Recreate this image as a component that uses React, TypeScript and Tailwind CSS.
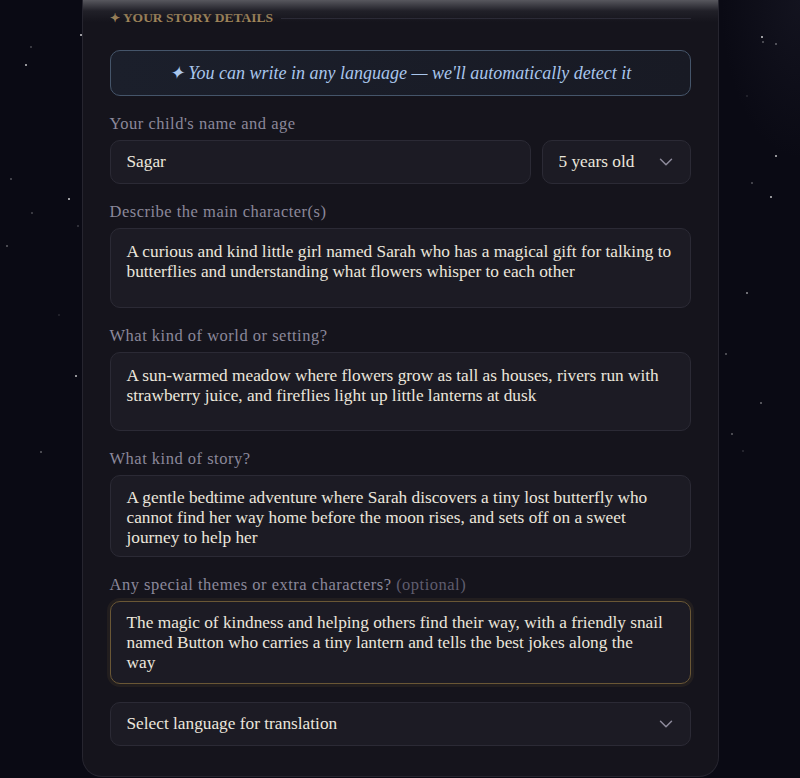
import { useEffect, useRef, useState } from 'react';
import { ChevronDown } from 'lucide-react';

const stars = [
  { x: 80, y: 34, o: 0.8 }, { x: 30, y: 46, o: 0.25 }, { x: 25, y: 64, o: 0.75 },
  { x: 10, y: 178, o: 0.3 }, { x: 68, y: 198, o: 0.8 }, { x: 31, y: 212, o: 0.25 },
  { x: 77, y: 225, o: 0.2 }, { x: 6, y: 245, o: 0.35 }, { x: 58, y: 314, o: 0.12 },
  { x: 75, y: 375, o: 0.75 }, { x: 40, y: 451, o: 0.35 },
  { x: 761, y: 36, o: 0.85 }, { x: 762, y: 41, o: 0.35 }, { x: 775, y: 43, o: 0.4 },
  { x: 746, y: 95, o: 0.12 }, { x: 775, y: 155, o: 0.75 }, { x: 751, y: 182, o: 0.3 },
  { x: 770, y: 196, o: 0.75 }, { x: 746, y: 292, o: 0.55 }, { x: 725, y: 353, o: 0.35 },
  { x: 760, y: 402, o: 0.4 }, { x: 731, y: 433, o: 0.35 }, { x: 742, y: 450, o: 0.15 },
];

const ages = ['3 years old', '4 years old', '5 years old', '6 years old', '7 years old', '8 years old'];

function Label({ children }: { children: React.ReactNode }) {
  return <label className="block text-[16.5px] leading-[20px] tracking-[0.5px] text-[#8b889a] mb-[6px]">{children}</label>;
}

export default function App() {
  const [name, setName] = useState('Sagar');
  const [age, setAge] = useState('5 years old');
  const [character, setCharacter] = useState('A curious and kind little girl named Sarah who has a magical gift for talking to\nbutterflies and understanding what flowers whisper to each other');
  const [world, setWorld] = useState('A sun-warmed meadow where flowers grow as tall as houses, rivers run with\nstrawberry juice, and fireflies light up little lanterns at dusk');
  const [story, setStory] = useState('A gentle bedtime adventure where Sarah discovers a tiny lost butterfly who\ncannot find her way home before the moon rises, and sets off on a sweet\njourney to help her');
  const [themes, setThemes] = useState('The magic of kindness and helping others find their way, with a friendly snail\nnamed Button who carries a tiny lantern and tells the best jokes along the\nway');
  const [language, setLanguage] = useState('');
  const themesRef = useRef<HTMLTextAreaElement>(null);

  useEffect(() => {
    const el = themesRef.current;
    if (el) {
      el.focus();
      el.setSelectionRange(el.value.length, el.value.length);
    }
  }, []);

  const field = 'block w-full rounded-[10px] border border-[#2b2a35] bg-[#1c1b24] text-[#ebe6dc] text-[17.3px] outline-none';
  const area = `${field} resize-none overflow-hidden pl-[16px] pr-[10px] pb-[8px] leading-[20px] caret-[#ebe6dc] focus:border-[#6a5735] focus:shadow-[0_0_0_3px_rgba(190,150,80,0.08)]`;

  return (
    <div className="relative min-h-screen overflow-hidden bg-[#0a0a14] font-['Liberation_Serif',serif]">
      {stars.map((s, i) => (
        <div key={i} className="absolute h-[2px] w-[2px] rounded-full bg-white" style={{ left: s.x, top: s.y, opacity: s.o }} />
      ))}
      <div className="pointer-events-none absolute right-0 top-0 h-[160px] w-[80px] bg-[radial-gradient(ellipse_at_top_right,rgba(60,60,80,0.18),transparent_70%)]" />

      <div className="relative mx-auto w-[637px] rounded-b-[20px] border border-t-0 border-[#26252f] bg-[#15141c] px-[27px] pt-[8px] pb-[30px]">
        <div className="pointer-events-none absolute inset-x-0 top-0 h-[22px] bg-gradient-to-b from-[rgba(110,110,116,0.75)] via-[rgba(60,60,68,0.3)] to-transparent" />

        <div className="flex h-[20px] items-center gap-[8px]">
          <span className="whitespace-nowrap text-[13.5px] font-semibold text-[#a3875a]"><span className="text-[12px]">✦</span>&nbsp;YOUR STORY DETAILS</span>
          <div className="h-px flex-1 bg-[#2a2935]" />
        </div>

        <div className="mt-[22px] flex h-[46px] items-center justify-center rounded-[10px] border border-[#45556a] bg-gradient-to-r from-[#1b1f2b] to-[#181a24] text-[18px] italic text-[#a9c6ec]">
          ✦ You can write in any language — we'll automatically detect it
        </div>

        <div className="mt-[18px] flex flex-col gap-[18px]">
          <div>
            <Label>Your child's name and age</Label>
            <div className="flex gap-[11px]">
              <input value={name} onChange={e => setName(e.target.value)} className={`${field} h-[44px] flex-1 px-[16px]`} />
              <div className="relative w-[149px] shrink-0">
                <select value={age} onChange={e => setAge(e.target.value)} className={`${field} h-[44px] appearance-none pl-[16px] pr-[36px]`}>
                  {ages.map(a => <option key={a} value={a}>{a}</option>)}
                </select>
                <ChevronDown size={22} strokeWidth={1.6} className="pointer-events-none absolute right-[14px] top-[11px] text-[#8e8b9c]" />
              </div>
            </div>
          </div>

          <div>
            <Label>Describe the main character(s)</Label>
            <textarea value={character} onChange={e => setCharacter(e.target.value)} className={`${area} h-[80px] pt-[13px]`} />
          </div>

          <div>
            <Label>What kind of world or setting?</Label>
            <textarea value={world} onChange={e => setWorld(e.target.value)} className={`${area} h-[79px] pt-[13px]`} />
          </div>

          <div>
            <Label>What kind of story?</Label>
            <textarea value={story} onChange={e => setStory(e.target.value)} className={`${area} h-[82px] pt-[12px]`} />
          </div>

          <div>
            <Label>Any special themes or extra characters? <span className="text-[#5f5d6e]">(optional)</span></Label>
            <textarea ref={themesRef} value={themes} onChange={e => setThemes(e.target.value)} className={`${area} h-[83px] pt-[11px] border-[#6a5735] shadow-[0_0_0_3px_rgba(190,150,80,0.08)]`} />
          </div>

          <div className="relative">
            <select value={language} onChange={e => setLanguage(e.target.value)} className={`${field} h-[44px] appearance-none px-[16px] text-[#dcd8d0]`}>
              <option value="">Select language for translation</option>
              <option value="es">Spanish</option>
              <option value="fr">French</option>
              <option value="hi">Hindi</option>
              <option value="de">German</option>
            </select>
            <ChevronDown size={22} strokeWidth={1.6} className="pointer-events-none absolute right-[14px] top-[11px] text-[#8e8b9c]" />
          </div>
        </div>
      </div>
    </div>
  );
}
